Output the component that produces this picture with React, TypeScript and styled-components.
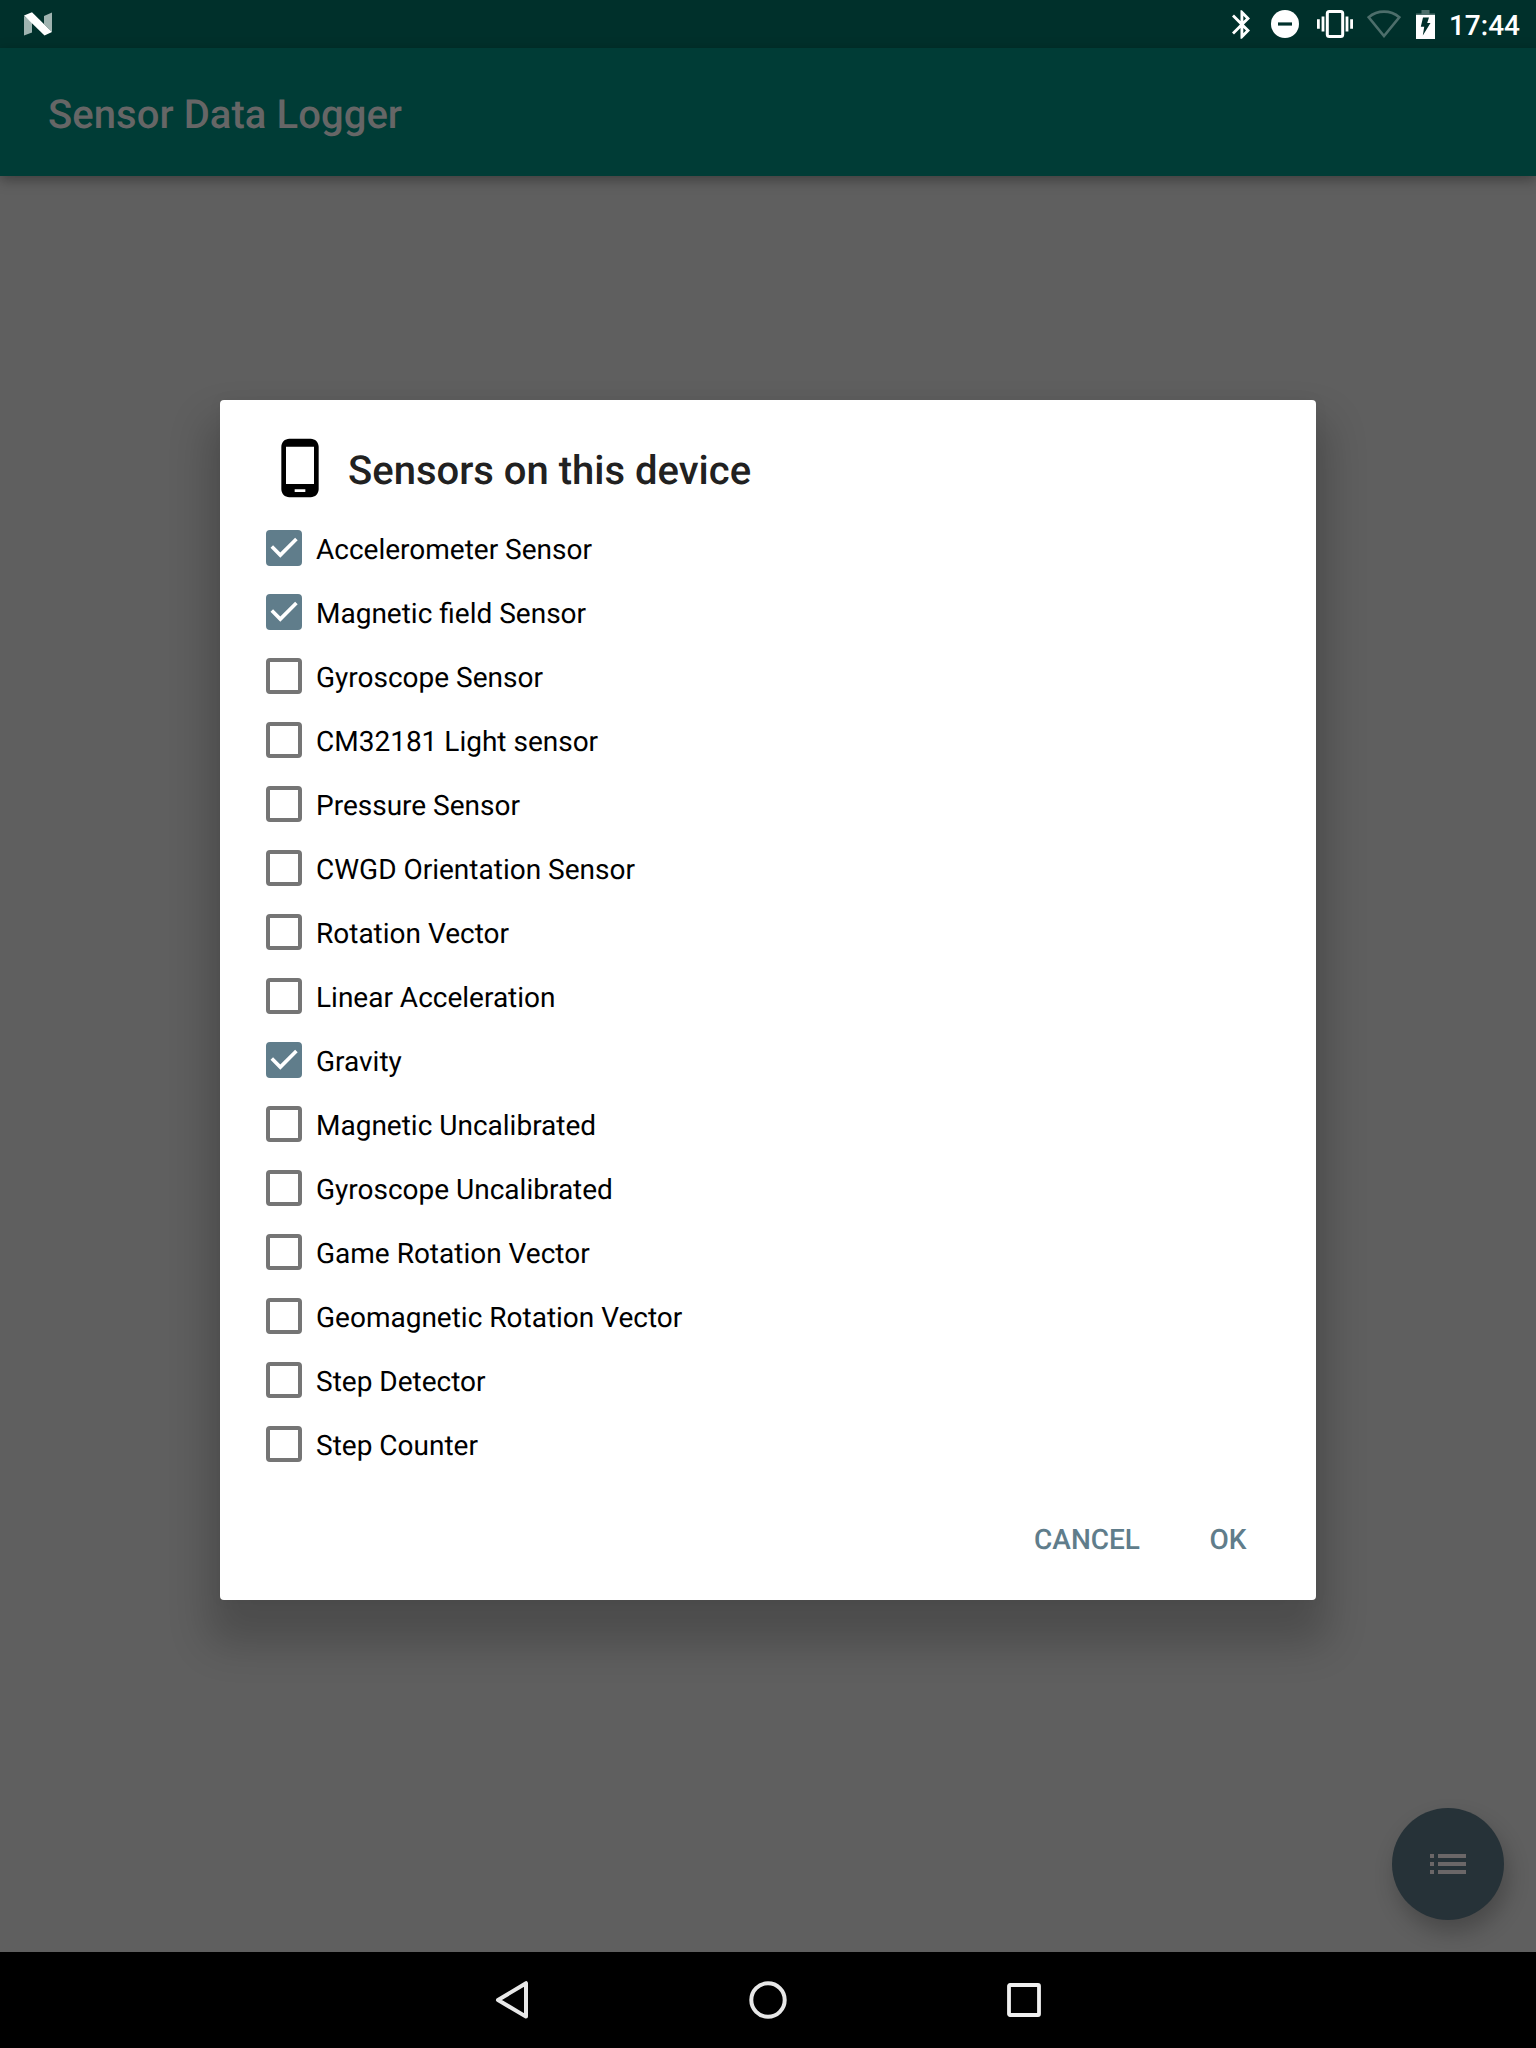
import React, { useState } from "react";
import styled, { createGlobalStyle } from "styled-components";

const GlobalStyle = createGlobalStyle`
  * { box-sizing: border-box; }
  html, body { margin: 0; padding: 0; background: #000; }
  body { font-family: Roboto, "Noto Sans", sans-serif; text-rendering: geometricPrecision; }
`;

const Screen = styled.div`
  position: relative;
  display: flex;
  flex-direction: column;
  width: 1536px;
  height: 2048px;
  overflow: hidden;
`;

const StatusBar = styled.header`
  display: flex;
  align-items: center;
  justify-content: space-between;
  height: 48px;
  padding: 0 16px 0 24px;
  background: #00302b;
  color: #fff;
  flex: none;
`;

const StatusIcons = styled.div`
  display: flex;
  align-items: center;
`;

const StatusIcon = styled.svg<{ $gap: number }>`
  display: block;
  margin-right: ${(p) => p.$gap}px;
`;

const Clock = styled.time`
  height: 48px;
  font-size: 28px;
  line-height: 50px;
  font-weight: 500;
  padding-top: 1px;
`;

const AppBar = styled.div`
  position: relative;
  display: flex;
  align-items: center;
  height: 128px;
  padding: 6px 48px 0;
  background: #003c36;
  box-shadow: 0 4px 12px rgba(0, 0, 0, 0.34);
  flex: none;
`;

const AppTitle = styled.h1`
  margin: 0;
  font-size: 40px;
  font-weight: 500;
  line-height: 48px;
  letter-spacing: 0.06px;
  color: #666;
`;

const Content = styled.main`
  flex: 1;
  display: flex;
  justify-content: center;
  align-items: flex-start;
  padding-top: 224px;
  background: #5f5f5f;
`;

const Dialog = styled.section`
  display: flex;
  flex-direction: column;
  width: 1096px;
  height: 1200px;
  padding: 36px 48px 0;
  border-radius: 4px;
  background: #fff;
  box-shadow: 0 32px 40px 12px rgba(0, 0, 0, 0.2), 0 0 16px rgba(0, 0, 0, 0.04);
`;

const DialogHeader = styled.div`
  display: flex;
  align-items: center;
  gap: 16px;
  height: 64px;
`;

const DialogTitle = styled.h2`
  margin: 0;
  padding-top: 5px;
  font-size: 40px;
  font-weight: 500;
  line-height: 48px;
  color: #212121;
`;

const SensorList = styled.ul`
  list-style: none;
  margin: 16px 0 0 -2px;
  padding: 0;
`;

const SensorRow = styled.li`
  display: flex;
  align-items: center;
  height: 64px;
  gap: 14px;
  cursor: pointer;
`;

const CheckBox = styled.span<{ $checked: boolean }>`
  display: flex;
  width: 36px;
  height: 36px;
  border-radius: 4px;
  border: 4px solid ${(p) => (p.$checked ? "#607d8b" : "#757575")};
  background: ${(p) => (p.$checked ? "#607d8b" : "#fff")};
`;

const SensorName = styled.span`
  padding-top: 4px;
  font-size: 28px;
  line-height: 36px;
  color: #000;
`;

const Actions = styled.div`
  display: flex;
  justify-content: flex-end;
  gap: 8px;
  margin-top: 27px;
  margin-right: -24px;
`;

const TextButton = styled.button<{ $width: number }>`
  width: ${(p) => p.$width}px;
  height: 72px;
  padding: 2px 0 0;
  border: 0;
  background: none;
  font: 500 28px/36px Roboto, sans-serif;
  text-rendering: inherit;
  color: #607d8b;
`;

const Fab = styled.button`
  position: absolute;
  right: 32px;
  bottom: 128px;
  display: flex;
  align-items: center;
  justify-content: center;
  width: 112px;
  height: 112px;
  padding: 0;
  border: 0;
  border-radius: 50%;
  background: #263238;
  box-shadow: 4px 12px 22px rgba(0, 0, 0, 0.24);
`;

const NavBar = styled.nav`
  position: relative;
  display: flex;
  justify-content: center;
  align-items: center;
  height: 96px;
  background: #000;
  flex: none;
`;

const NavButton = styled.span`
  display: flex;
  justify-content: center;
  width: 256px;
`;

const sensors: [string, boolean][] = [
  ["Accelerometer Sensor", true],
  ["Magnetic field Sensor", true],
  ["Gyroscope Sensor", false],
  ["CM32181 Light sensor", false],
  ["Pressure Sensor", false],
  ["CWGD Orientation Sensor", false],
  ["Rotation Vector", false],
  ["Linear Acceleration", false],
  ["Gravity", true],
  ["Magnetic Uncalibrated", false],
  ["Gyroscope Uncalibrated", false],
  ["Game Rotation Vector", false],
  ["Geomagnetic Rotation Vector", false],
  ["Step Detector", false],
  ["Step Counter", false],
];

const Nougat = () => (
  <StatusIcon $gap={0} width="28" height="24" viewBox="0 0 28 24">
    <path d="M0 4 8 10V20.500L0 23.500zM20 4 28 .5V20L20 12z" fill="#9fb3b0" />
    <path d="M0 3.500 8 .3 28 20 20.500 23.500z" fill="#fff" />
  </StatusIcon>
);

const SystemIcons = () => (
  <>
    <StatusIcon $gap={21} width="18" height="29" viewBox="5 2 12.710 20" fill="#fff">
      <path d="M17.710 7.710L12 2h-1v7.590L6.410 5 5 6.410 10.590 12 5 17.590 6.410 19 11 14.410V22h1l5.710-5.710-4.300-4.290 4.300-4.290zM13 5.830l1.880 1.880L13 9.590V5.830zm1.880 10.460L13 18.170v-3.760l1.880 1.880z" />
    </StatusIcon>
    <StatusIcon $gap={18} width="28" height="28" viewBox="0 0 28 28">
      <circle cx="14" cy="14" r="14" fill="#fff" />
      <path d="M7 12.400h14v3.200H7z" fill="#00302b" />
    </StatusIcon>
    <StatusIcon $gap={14} width="36" height="28" viewBox="0 0 36 28" fill="#fff">
      <path d="M0 9.200h2.800v9.600H0zM4.600 6.600h2.800v14.800H4.600zM28.600 6.600h2.800v14.800h-2.800zM33.200 9.200H36v9.600h-2.800z" />
      <rect x="10.300" y="1.500" width="15.400" height="25" rx="2" fill="none" stroke="#fff" strokeWidth="3" />
    </StatusIcon>
    <StatusIcon $gap={15} width="34" height="28" viewBox="0 0 34 28" fill="none" stroke="#4d6e6b" strokeWidth="2.600">
      <path d="M1.700 7.200C10.500-.3 23.500-.3 32.300 7.200L17 26z" />
    </StatusIcon>
    <StatusIcon $gap={14} width="19" height="29" viewBox="0 0 19 29">
      <path d="M5.500 0h8v3.500H19V6H0V3.500h5.500z" fill="#4d6e6b" />
      <path d="M0 5h19v24H0z" fill="#fff" />
      <path d="M7 7.500h6L11.200 13h3.300L6.800 25.500l1.400-8.700H4.800z" fill="#00302b" />
    </StatusIcon>
  </>
);

export default function App() {
  const [checked, setChecked] = useState(sensors.map((s) => s[1]));
  const toggle = (i: number) => setChecked(checked.map((c, n) => (n === i ? !c : c)));

  return (
    <Screen>
      <GlobalStyle />
      <StatusBar>
        <Nougat />
        <StatusIcons>
          <SystemIcons />
          <Clock>17:44</Clock>
        </StatusIcons>
      </StatusBar>
      <AppBar>
        <AppTitle>Sensor Data Logger</AppTitle>
      </AppBar>
      <Content>
        <Dialog>
          <DialogHeader>
            <svg width="64" height="64" viewBox="0 0 24 24">
              <path d="M16 1H8C6.340 1 5 2.340 5 4v16c0 1.660 1.340 3 3 3h8c1.660 0 3-1.340 3-3V4c0-1.660-1.340-3-3-3zm-2 20h-4v-1h4v1zm3.250-3H6.750V4h10.500v14z" />
            </svg>
            <DialogTitle>Sensors on this device</DialogTitle>
          </DialogHeader>
          <SensorList>
            {sensors.map(([name], i) => (
              <SensorRow key={name} onClick={() => toggle(i)}>
                <CheckBox $checked={checked[i]}>
                  {checked[i] && (
                    <svg width="28" height="28" viewBox="0 0 28 28" fill="none" stroke="#fff" strokeWidth="3.600">
                      <path d="M1.800 12.600 10.300 21.100 26.400 5" />
                    </svg>
                  )}
                </CheckBox>
                <SensorName>{name}</SensorName>
              </SensorRow>
            ))}
          </SensorList>
          <Actions>
            <TextButton $width={138}>CANCEL</TextButton>
            <TextButton $width={128}>OK</TextButton>
          </Actions>
        </Dialog>
      </Content>
      <Fab aria-label="Sensors">
        <svg width="48" height="48" viewBox="0 0 24 24" fill="#6b6768">
          <path d="M3 13h2v-2H3v2zm0 4h2v-2H3v2zm0-8h2V7H3v2zm4 4h14v-2H7v2zm0 4h14v-2H7v2zM7 7v2h14V7H7z" />
        </svg>
      </Fab>
      <NavBar>
        <NavButton>
          <svg width="40" height="40" viewBox="0 0 40 40" fill="none" stroke="#e8e8e8" strokeWidth="4" strokeLinejoin="round">
            <path d="M34 3.200V36.600L6 20z" />
          </svg>
        </NavButton>
        <NavButton>
          <svg width="40" height="40" viewBox="0 0 40 40" fill="none" stroke="#e8e8e8" strokeWidth="4">
            <circle cx="20" cy="20" r="16.700" />
          </svg>
        </NavButton>
        <NavButton>
          <svg width="40" height="40" viewBox="0 0 40 40" fill="none" stroke="#f0f0f0" strokeWidth="3.800">
            <rect x="5" y="5" width="30" height="30" rx="1" />
          </svg>
        </NavButton>
      </NavBar>
    </Screen>
  );
}
